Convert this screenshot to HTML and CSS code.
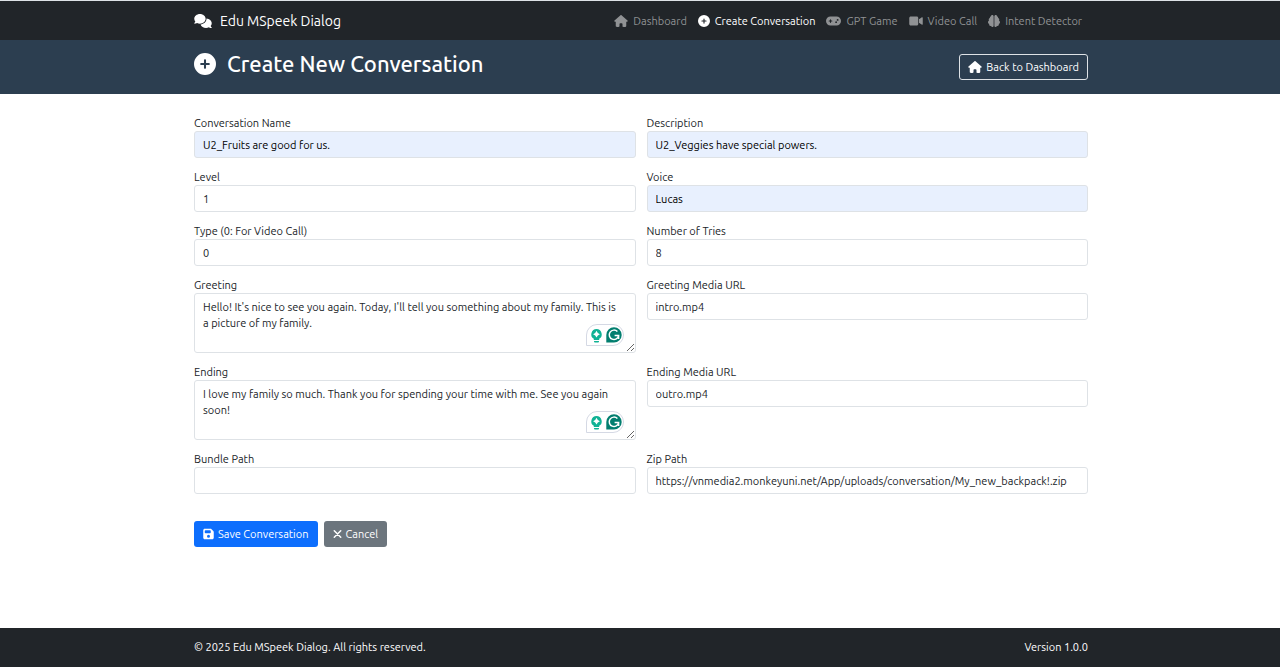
FILE: index.html
```html
<!DOCTYPE html>
<html lang="en">
<head>
<meta charset="utf-8">
<meta name="viewport" content="width=device-width, initial-scale=1">
<title>Create New Conversation</title>
<link rel="stylesheet" href="styles.css">
</head>
<body>
<svg class="sprite" aria-hidden="true">
  <symbol id="house" viewBox="0 0 576 512"><path d="M575.8 255.5c0 18-15 32.1-32 32.1h-32l.7 160.2c0 2.7-.2 5.4-.5 8.1V472c0 22.1-17.9 40-40 40H392c-22.1 0-40-17.9-40-40V384c0-17.7-14.3-32-32-32H256c-17.7 0-32 14.3-32 32v88c0 22.1-17.9 40-40 40H104c-22.1 0-40-17.9-40-40V287.6H32c-18 0-32-14-32-32.1c0-9 3-17 10-24L266.4 8c7-7 15-8 22-8s15 2 21 7L564.8 231.5c8 7 12 15 11 24z"/></symbol>
  <symbol id="plus" viewBox="0 0 512 512"><path d="M256 512A256 256 0 1 0 256 0a256 256 0 1 0 0 512zM232 344V280H168c-13.300 0-24-10.700-24-24s10.700-24 24-24h64V168c0-13.300 10.700-24 24-24s24 10.700 24 24v64h64c13.300 0 24 10.700 24 24s-10.700 24-24 24H280v64c0 13.300-10.700 24-24 24s-24-10.700-24-24z"/></symbol>
  <symbol id="gamepad" viewBox="0 0 640 512"><path d="M192 64C86 64 0 150 0 256S86 448 192 448H448c106 0 192-86 192-192s-86-192-192-192H192zM496 168a40 40 0 1 1 0 80 40 40 0 1 1 0-80zM392 304a40 40 0 1 1 80 0 40 40 0 1 1 -80 0zM168 200c0-13.300 10.700-24 24-24s24 10.700 24 24v32h32c13.300 0 24 10.700 24 24s-10.700 24-24 24H216v32c0 13.300-10.700 24-24 24s-24-10.700-24-24V280H136c-13.300 0-24-10.700-24-24s10.700-24 24-24h32V200z"/></symbol>
  <symbol id="video" viewBox="0 0 576 512"><path d="M0 128C0 92.700 28.700 64 64 64H320c35.300 0 64 28.700 64 64V384c0 35.300-28.700 64-64 64H64c-35.300 0-64-28.700-64-64V128zM559.100 99.800c10.400 5.600 16.900 16.400 16.900 28.200V384c0 11.800-6.500 22.600-16.900 28.200s-23 5-32.900-1.600l-96-64L416 337.100V174.900l14.200-9.500 96-64c9.800-6.500 22.400-7.200 32.900-1.600z"/></symbol>
  <symbol id="brain" viewBox="0 0 512 512"><path id="lobe" d="M184 0c30.900 0 56 25.100 56 56V456c0 30.900-25.100 56-56 56c-28.900 0-52.700-21.900-55.700-50.100c-5.200 1.400-10.700 2.100-16.300 2.100c-35.300 0-64-28.700-64-64c0-7.400 1.300-14.600 3.600-21.200C21.400 367.400 0 338.200 0 304c0-31.900 18.700-59.500 45.800-72.300C37.100 220.800 32 207 32 192c0-30.700 21.600-56.300 50.400-62.600C80.800 123.900 80 118 80 112c0-29.900 20.600-55.100 48.300-62.100C131.300 21.900 155.100 0 184 0z"/><use href="#lobe" transform="translate(512 0) scale(-1 1)"/></symbol>
  <symbol id="comments" viewBox="0 0 640 512"><path d="M208 352c114.900 0 208-78.800 208-176S322.900 0 208 0S0 78.800 0 176c0 38.600 14.700 74.300 39.600 103.400c-3.500 9.400-8.700 17.700-14.200 24.700c-4.800 6.200-9.700 11-13.300 14.300c-1.800 1.600-3.300 2.900-4.300 3.700l-1.300 1C1 327.200-1.400 334.400 .8 340.900S9.100 352 16 352c21.800 0 43.800-5.600 62.100-12.500c9.200-3.500 17.800-7.400 25.200-11.400C134.100 343.300 169.800 352 208 352zM448 176c0 112.300-99.100 196.900-216.500 207C255.800 457.400 336.400 512 432 512c38.200 0 73.900-8.700 104.700-23.900c7.500 4 16 7.900 25.200 11.400c18.300 6.900 40.300 12.500 62.100 12.500c6.900 0 13.100-4.500 15.200-11.100c2.100-6.600-.2-13.800-5.800-17.900l-1.300-1c-1-.8-2.500-2-4.300-3.700c-3.600-3.300-8.500-8.100-13.300-14.300c-5.500-7-10.700-15.400-14.200-24.700c24.900-29 39.600-64.700 39.600-103.400c0-92.800-84.900-168.900-192.600-175.500c.4 5.100 .6 10.300 .6 15.500z"/></symbol>
  <symbol id="floppy" viewBox="0 0 448 512"><path d="M64 32C28.700 32 0 60.700 0 96V416c0 35.300 28.700 64 64 64H384c35.300 0 64-28.700 64-64V173.300c0-17-6.700-33.300-18.700-45.300L352 50.700C340 38.700 323.700 32 306.700 32H64zm0 96c0-17.700 14.300-32 32-32H288c17.700 0 32 14.300 32 32v64c0 17.700-14.300 32-32 32H96c-17.700 0-32-14.300-32-32V128zM224 288a64 64 0 1 1 0 128 64 64 0 1 1 0-128z"/></symbol>
  <symbol id="xmark" viewBox="0 0 384 512"><path d="M54 118 330 394M330 118 54 394" stroke="currentColor" stroke-width="64" stroke-linecap="round"/></symbol>
  <symbol id="assist" viewBox="0 0 38 22">
    <path d="M11 .5H27a10.500 10.500 0 0 1 0 21H.5V11A10.500 10.500 0 0 1 11 .5z" fill="#fff" stroke="#d5d9e4"/>
    <path d="M10.500 5a5.300 5.300 0 0 0-2.700 9.800V16h5.400v-1.200A5.300 5.300 0 0 0 10.500 5z" fill="#10b295"/>
    <path d="M8 17h5v.6a1 1 0 0 1-1 1H9a1 1 0 0 1-1-1z" fill="#10b295"/>
    <path d="m10.500 6.800 1.300 2.100 2.100 1.300-2.100 1.300-1.300 2.100-1.300-2.100-2.100-1.300 2.100-1.300z" fill="#fff"/>
    <path d="M28 3.200a7.700 7.700 0 1 1 0 15.400h-7.700v-7.700A7.700 7.700 0 0 1 28 3.200z" fill="#027e6f"/>
    <path d="M31.400 7.600A4.700 4.700 0 1 0 32.600 11.600H28.600M32.600 11.600V15" fill="none" stroke="#fff" stroke-width="1.500"/>
  </symbol>
</svg>

<nav class="navbar">
  <div class="container bar">
    <a class="brand" href="#"><svg class="icon icon-brand"><use href="#comments"/></svg>Edu MSpeek Dialog</a>
    <div class="links">
      <a href="#"><svg class="icon wide"><use href="#house"/></svg>Dashboard</a>
      <a class="active" href="#"><svg class="icon"><use href="#plus"/></svg>Create Conversation</a>
      <a href="#"><svg class="icon wider"><use href="#gamepad"/></svg>GPT Game</a>
      <a href="#"><svg class="icon wide"><use href="#video"/></svg>Video Call</a>
      <a href="#"><svg class="icon"><use href="#brain"/></svg>Intent Detector</a>
    </div>
  </div>
</nav>

<header class="page-header">
  <div class="container bar">
    <h1><svg class="icon icon-title"><use href="#plus"/></svg>Create New Conversation</h1>
    <a class="btn btn-outline" href="#"><svg class="icon wide"><use href="#house"/></svg>Back to Dashboard</a>
  </div>
</header>

<main class="container content">
  <form>
    <div class="fields">
      <div class="field"><label for="name">Conversation Name</label><input class="filled" id="name" type="text" value="U2_Fruits are good for us."></div>
      <div class="field"><label for="description">Description</label><input class="filled" id="description" type="text" value="U2_Veggies have special powers."></div>
      <div class="field"><label for="level">Level</label><input id="level" type="text" value="1"></div>
      <div class="field"><label for="voice">Voice</label><input class="filled" id="voice" type="text" value="Lucas"></div>
      <div class="field"><label for="type">Type (0: For Video Call)</label><input id="type" type="text" value="0"></div>
      <div class="field"><label for="tries">Number of Tries</label><input id="tries" type="text" value="8"></div>
      <div class="field"><label for="greeting">Greeting</label><textarea id="greeting" spellcheck="false">Hello! It's nice to see you again. Today, I'll tell you something about my family. This is a picture of my family.</textarea><svg class="assist"><use href="#assist"/></svg></div>
      <div class="field"><label for="greeting-url">Greeting Media URL</label><input id="greeting-url" type="text" value="intro.mp4"></div>
      <div class="field"><label for="ending">Ending</label><textarea id="ending" spellcheck="false">I love my family so much. Thank you for spending your time with me. See you again soon!</textarea><svg class="assist"><use href="#assist"/></svg></div>
      <div class="field"><label for="ending-url">Ending Media URL</label><input id="ending-url" type="text" value="outro.mp4"></div>
      <div class="field"><label for="bundle">Bundle Path</label><input id="bundle" type="text"></div>
      <div class="field"><label for="zip">Zip Path</label><input id="zip" type="text" value="https://vnmedia2.monkeyuni.net/App/uploads/conversation/My_new_backpack!.zip"></div>
    </div>
    <div class="actions">
      <button class="btn btn-primary" type="submit"><svg class="icon narrow"><use href="#floppy"/></svg>Save Conversation</button>
      <button class="btn btn-secondary" type="button"><svg class="icon slim"><use href="#xmark"/></svg>Cancel</button>
    </div>
  </form>
</main>

<footer class="footer">
  <div class="container bar"><span>© 2025 Edu MSpeek Dialog. All rights reserved.</span><span>Version 1.0.0</span></div>
</footer>
</body>
</html>
```
FILE: styles.css
```css
* { box-sizing: border-box; }

body {
  margin: 0;
  min-height: 100vh;
  display: flex;
  flex-direction: column;
  background: #fff;
  color: #212529;
  font: 11px/16px "Ubuntu", "Noto Sans", sans-serif;
}

.sprite { position: absolute; width: 0; height: 0; }

.container {
  width: 100%;
  max-width: 918px;
  margin: 0 auto;
  padding: 0 11px 0 13px;
}

.bar {
  display: flex;
  align-items: center;
  justify-content: space-between;
}

a { color: inherit; text-decoration: none; }

.icon { width: 12px; height: 12px; fill: currentColor; flex: none; }
.wide { width: 14px; }
.wider { width: 15px; }
.narrow { width: 11px; }
.slim { width: 9px; }
.icon-brand { width: 18px; height: 14px; }
.icon-title { width: 22px; height: 22px; }

.navbar {
  border-top: 1px solid #dee2e6;
  background: #212529;
  color: #fff;
  padding: 8px 0 7px;
}

.brand {
  display: flex;
  align-items: center;
  gap: 8px;
  font-size: 14px;
  line-height: 24px;
}

.links {
  display: flex;
  gap: 11px;
  padding-right: 6px;
  color: #909294;
}

.links a { display: flex; align-items: center; gap: 5px; }
.links .active { color: #fff; }

.page-header {
  background: #2c3e50;
  color: #fff;
  padding: 11px 0;
}

h1 {
  display: flex;
  align-items: center;
  gap: 11px;
  margin: 0 0 6px;
  font-size: 22px;
  line-height: 26px;
  font-weight: 500;
}

.btn {
  display: inline-flex;
  align-items: center;
  gap: 4px;
  padding: 4px 8px;
  border: 1px solid transparent;
  border-radius: 3px;
  color: #fff;
  font: inherit;
}

.btn-outline { border-color: #dee2e6; }
.btn-primary { background: #0d6efd; }
.btn-secondary { background: #6c757d; }

.content { flex: 1; padding-top: 21px; padding-bottom: 22px; }

.fields {
  display: grid;
  grid-template-columns: 1fr 1fr;
  gap: 11px;
}

.field { position: relative; display: flex; flex-direction: column; }

.field input,
.field textarea {
  width: 100%;
  height: 27px;
  margin: 0;
  padding: 4px 8px;
  border: 1px solid #dee2e6;
  border-radius: 3px;
  background: #fff;
  color: #212529;
  font: inherit;
}

.field textarea { height: 60px; padding-top: 5px; padding-right: 16px; resize: vertical; }
.field .filled { background: #e8f0fe; color: #000; }

.assist { position: absolute; right: 12px; bottom: 7px; width: 38px; height: 22px; }

.actions { display: flex; gap: 6px; margin-top: 27px; }

.footer {
  background: #212529;
  color: #fff;
  padding: 11px 0 12px;
}
```
